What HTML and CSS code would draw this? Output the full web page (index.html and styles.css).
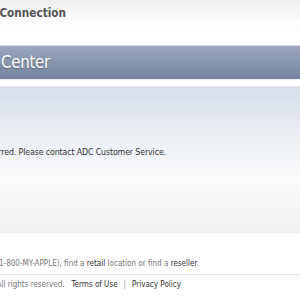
FILE: index.html
```html
<!DOCTYPE html>
<html lang="en">
<head>
    <meta charset="UTF-8">
    <meta name="viewport" content="width=device-width, initial-scale=1.0">
    <title>ADC Member Center</title>
    <link rel="stylesheet" href="styles.css">
</head>
<body>
    <div class="masthead">
        <div class="line masthead-title"><span>Apple Developer Connection</span></div>
    </div>

    <div class="banner">
        <div class="line banner-title"><span>ADC Member Center</span></div>
    </div>

    <div class="content-box">
        <div class="line message"><span>An error has occurred. Please contact ADC Customer Service.</span></div>
    </div>

    <div class="footer">
        <div class="line footer-store">
            <span>Visit the <a href="#">Apple Store online</a> (1-800-MY-APPLE), find a <a href="#">retail</a> location or find a <a href="#">reseller</a>.</span>
        </div>
        <div class="footer-rule">
            <div class="line footer-legal">
                <span>Copyright © 2008 Apple Inc. All rights reserved.</span>
                <a class="legal-link" href="#">Terms of Use</a>
                <span class="divider">|</span>
                <a href="#">Privacy Policy</a>
            </div>
        </div>
    </div>
</body>
</html>
```

FILE: styles.css
```css
* {
    margin: 0;
    padding: 0;
    box-sizing: border-box;
}

body {
    font-family: "DejaVu Sans", Verdana, sans-serif;
    font-stretch: condensed;
    background: #fff;
    color: #333;
    overflow: hidden;
}

a {
    color: #333;
    text-decoration: none;
}

/* each line ends at a fixed x, the start runs off the left edge */
.line {
    display: flex;
    justify-content: flex-end;
    white-space: nowrap;
}

.line > * {
    flex-shrink: 0;
}

.masthead {
    height: 45px;
    padding-top: 6px;
    background: linear-gradient(#ededed 0%, #fafafa 40%, #fff 70%);
}

.masthead-title {
    width: 66px;
    font-size: 11.7px;
    font-weight: 600;
    color: #555;
}

.banner {
    height: 35px;
    border-top: 1px solid #d9dce4;
    border-bottom: 1px solid #eef0f4;
    background: linear-gradient(#9ca7bd, #7383a1);
    padding-top: 6px;
}

.banner-title {
    width: 50px;
    font-size: 16.8px;
    color: #fff;
    letter-spacing: -0.3px;
    text-shadow: 0 1px 1px rgba(0, 0, 0, 0.35);
}

.content-box {
    margin-top: 6px;
    height: 147px;
    border-top: 1px solid #e4e7ec;
    background: linear-gradient(#d7dee8 0%, #eef1f5 40%, #fbfbfc 65%, #f6f6f6 80%, #f0f0f0 100%);
    padding-top: 60px;
}

.message {
    width: 166px;
    font-size: 8.75px;
    letter-spacing: -0.12px;
    color: #333;
}

.footer {
    padding-top: 26px;
    font-size: 8px;
    color: #777;
}

.footer-store {
    width: 199px;
    height: 12px;
}

.footer-rule {
    margin-top: 3px;
    padding-top: 5px;
    border-top: 1px solid #e4e4e4;
}

.footer-legal {
    width: 181px;
}

.legal-link {
    margin-left: 7px;
}

.divider {
    color: #999;
    margin: 0 6px;
}
```
